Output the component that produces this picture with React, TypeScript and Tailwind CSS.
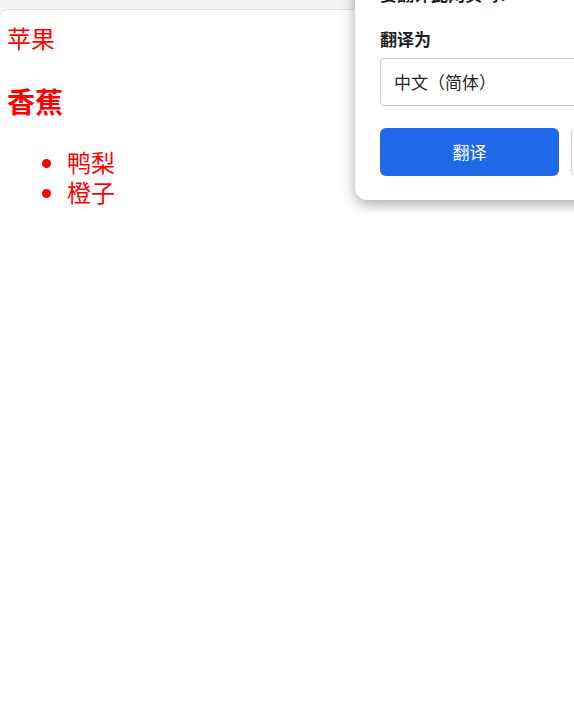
const cjk = "font-['Noto_Sans_CJK_SC','Noto_Sans',sans-serif]"

const fruits = ['鸭梨', '橙子']

function TranslatePopup() {
  return (
    <div className="absolute left-[355px] top-[-49px] w-[420px] rounded-b-xl rounded-l-xl bg-white px-[25px] pb-[24px] pt-[24px] text-[#1f1f1f] shadow-[0_4px_14px_rgba(0,0,0,0.35)]">
      <div className="mt-[7px] h-[24px] text-[17px] font-bold leading-[24px]">要翻译此网页吗？</div>
      <div className="mt-[21px] text-[17px] font-bold leading-[24px]">翻译为</div>
      <div className="mt-[7px] flex h-[48px] items-center rounded-[4px] border border-[#cccccc] pl-[13px] text-[17px]">
        中文（简体）
      </div>
      <div className="mt-[22px] flex gap-[12px]">
        <button className="h-[48px] w-[180px] rounded-[6px] bg-[#1f6ae9] text-[17px] text-white">
          翻译
        </button>
        <button className="h-[48px] w-[180px] rounded-[6px] border border-[#cccccc] bg-white text-[17px]">
          取消
        </button>
      </div>
    </div>
  )
}

export default function App() {
  return (
    <div className={`relative h-[703px] w-[574px] overflow-hidden bg-[#f3f3f3] pt-[9px] ${cjk}`}>
      <div className="h-full rounded-tl-lg border-t border-[#e2e2e2] bg-white pl-[7px] pt-[13px] text-[#ff0000]">
        <p className="text-[24px] leading-[30px]">苹果</p>
        <h3 className="mt-[31px] text-[28px] font-bold leading-[34px]">香蕉</h3>
        <ul className="mt-[29px] list-disc pl-[60px] text-[24px] leading-[30px]">
          {fruits.map((fruit) => (
            <li key={fruit}>{fruit}</li>
          ))}
        </ul>
      </div>
      <TranslatePopup />
    </div>
  )
}
